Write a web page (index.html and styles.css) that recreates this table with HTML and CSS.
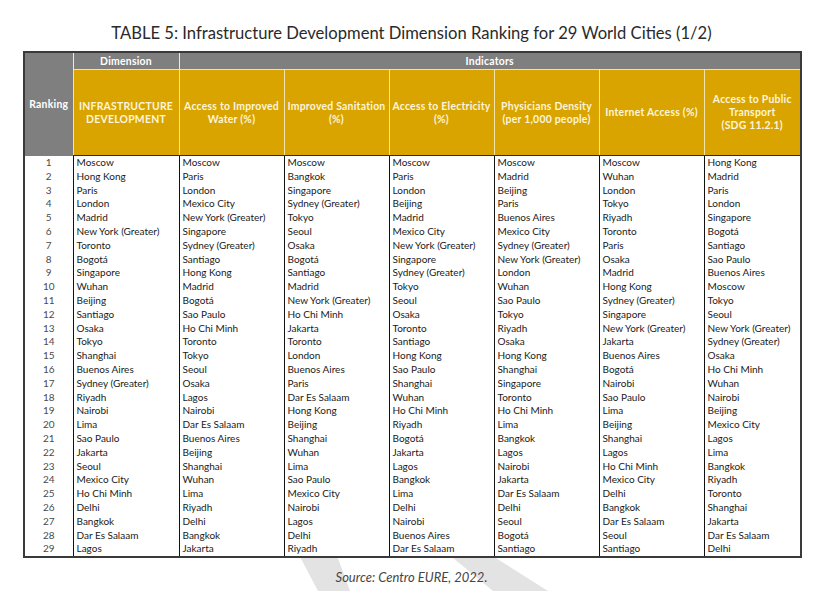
FILE: index.html
```html
<!DOCTYPE html>
<html lang="en">
<head>
<meta charset="utf-8">
<title>TABLE 5: Infrastructure Development Dimension Ranking</title>
<link rel="stylesheet" href="styles.css">
</head>
<body>
<svg class="watermark" width="823" height="591" viewBox="0 0 823 591" aria-hidden="true">
  <polygon points="298,553 336,553 350,591 318,591" fill="#e3e3e3"/>
  <polygon points="447,553 488,553 548,591 493,591" fill="#e3e3e3"/>
</svg>
<h1 class="title">TABLE 5: Infrastructure Development Dimension Ranking for 29 World Cities (1/2)</h1>
<table class="ranking-table">
  <colgroup>
    <col class="c-rank"><col class="c-dim"><col class="c-ind"><col class="c-ind"><col class="c-ind"><col class="c-ind"><col class="c-ind"><col class="c-last">
  </colgroup>
  <thead>
    <tr class="row-grey">
      <th class="grey rank-head" rowspan="2">Ranking</th>
      <th class="grey sep">Dimension</th>
      <th class="grey sep" colspan="6">Indicators</th>
    </tr>
    <tr class="row-gold">
      <th class="gold">INFRASTRUCTURE<br>DEVELOPMENT</th>
      <th class="gold">Access to Improved<br>Water (%)</th>
      <th class="gold">Improved Sanitation<br>(%)</th>
      <th class="gold">Access to Electricity<br>(%)</th>
      <th class="gold">Physicians Density<br>(per 1,000 people)</th>
      <th class="gold">Internet Access (%)</th>
      <th class="gold">Access to Public<br>Transport<br>(SDG 11.2.1)</th>
    </tr>
  </thead>
  <tbody>
    <tr><td class="rank">1</td><td>Moscow</td><td>Moscow</td><td>Moscow</td><td>Moscow</td><td>Moscow</td><td>Moscow</td><td>Hong Kong</td></tr>
    <tr><td class="rank">2</td><td>Hong Kong</td><td>Paris</td><td>Bangkok</td><td>Paris</td><td>Madrid</td><td>Wuhan</td><td>Madrid</td></tr>
    <tr><td class="rank">3</td><td>Paris</td><td>London</td><td>Singapore</td><td>London</td><td>Beijing</td><td>London</td><td>Paris</td></tr>
    <tr><td class="rank">4</td><td>London</td><td>Mexico City</td><td>Sydney (Greater)</td><td>Beijing</td><td>Paris</td><td>Tokyo</td><td>London</td></tr>
    <tr><td class="rank">5</td><td>Madrid</td><td>New York (Greater)</td><td>Tokyo</td><td>Madrid</td><td>Buenos Aires</td><td>Riyadh</td><td>Singapore</td></tr>
    <tr><td class="rank">6</td><td>New York (Greater)</td><td>Singapore</td><td>Seoul</td><td>Mexico City</td><td>Mexico City</td><td>Toronto</td><td>Bogotá</td></tr>
    <tr><td class="rank">7</td><td>Toronto</td><td>Sydney (Greater)</td><td>Osaka</td><td>New York (Greater)</td><td>Sydney (Greater)</td><td>Paris</td><td>Santiago</td></tr>
    <tr><td class="rank">8</td><td>Bogotá</td><td>Santiago</td><td>Bogotá</td><td>Singapore</td><td>New York (Greater)</td><td>Osaka</td><td>Sao Paulo</td></tr>
    <tr><td class="rank">9</td><td>Singapore</td><td>Hong Kong</td><td>Santiago</td><td>Sydney (Greater)</td><td>London</td><td>Madrid</td><td>Buenos Aires</td></tr>
    <tr><td class="rank">10</td><td>Wuhan</td><td>Madrid</td><td>Madrid</td><td>Tokyo</td><td>Wuhan</td><td>Hong Kong</td><td>Moscow</td></tr>
    <tr><td class="rank">11</td><td>Beijing</td><td>Bogotá</td><td>New York (Greater)</td><td>Seoul</td><td>Sao Paulo</td><td>Sydney (Greater)</td><td>Tokyo</td></tr>
    <tr><td class="rank">12</td><td>Santiago</td><td>Sao Paulo</td><td>Ho Chi Minh</td><td>Osaka</td><td>Tokyo</td><td>Singapore</td><td>Seoul</td></tr>
    <tr><td class="rank">13</td><td>Osaka</td><td>Ho Chi Minh</td><td>Jakarta</td><td>Toronto</td><td>Riyadh</td><td>New York (Greater)</td><td>New York (Greater)</td></tr>
    <tr><td class="rank">14</td><td>Tokyo</td><td>Toronto</td><td>Toronto</td><td>Santiago</td><td>Osaka</td><td>Jakarta</td><td>Sydney (Greater)</td></tr>
    <tr><td class="rank">15</td><td>Shanghai</td><td>Tokyo</td><td>London</td><td>Hong Kong</td><td>Hong Kong</td><td>Buenos Aires</td><td>Osaka</td></tr>
    <tr><td class="rank">16</td><td>Buenos Aires</td><td>Seoul</td><td>Buenos Aires</td><td>Sao Paulo</td><td>Shanghai</td><td>Bogotá</td><td>Ho Chi Minh</td></tr>
    <tr><td class="rank">17</td><td>Sydney (Greater)</td><td>Osaka</td><td>Paris</td><td>Shanghai</td><td>Singapore</td><td>Nairobi</td><td>Wuhan</td></tr>
    <tr><td class="rank">18</td><td>Riyadh</td><td>Lagos</td><td>Dar Es Salaam</td><td>Wuhan</td><td>Toronto</td><td>Sao Paulo</td><td>Nairobi</td></tr>
    <tr><td class="rank">19</td><td>Nairobi</td><td>Nairobi</td><td>Hong Kong</td><td>Ho Chi Minh</td><td>Ho Chi Minh</td><td>Lima</td><td>Beijing</td></tr>
    <tr><td class="rank">20</td><td>Lima</td><td>Dar Es Salaam</td><td>Beijing</td><td>Riyadh</td><td>Lima</td><td>Beijing</td><td>Mexico City</td></tr>
    <tr><td class="rank">21</td><td>Sao Paulo</td><td>Buenos Aires</td><td>Shanghai</td><td>Bogotá</td><td>Bangkok</td><td>Shanghai</td><td>Lagos</td></tr>
    <tr><td class="rank">22</td><td>Jakarta</td><td>Beijing</td><td>Wuhan</td><td>Jakarta</td><td>Lagos</td><td>Lagos</td><td>Lima</td></tr>
    <tr><td class="rank">23</td><td>Seoul</td><td>Shanghai</td><td>Lima</td><td>Lagos</td><td>Nairobi</td><td>Ho Chi Minh</td><td>Bangkok</td></tr>
    <tr><td class="rank">24</td><td>Mexico City</td><td>Wuhan</td><td>Sao Paulo</td><td>Bangkok</td><td>Jakarta</td><td>Mexico City</td><td>Riyadh</td></tr>
    <tr><td class="rank">25</td><td>Ho Chi Minh</td><td>Lima</td><td>Mexico City</td><td>Lima</td><td>Dar Es Salaam</td><td>Delhi</td><td>Toronto</td></tr>
    <tr><td class="rank">26</td><td>Delhi</td><td>Riyadh</td><td>Nairobi</td><td>Delhi</td><td>Delhi</td><td>Bangkok</td><td>Shanghai</td></tr>
    <tr><td class="rank">27</td><td>Bangkok</td><td>Delhi</td><td>Lagos</td><td>Nairobi</td><td>Seoul</td><td>Dar Es Salaam</td><td>Jakarta</td></tr>
    <tr><td class="rank">28</td><td>Dar Es Salaam</td><td>Bangkok</td><td>Delhi</td><td>Buenos Aires</td><td>Bogotá</td><td>Seoul</td><td>Dar Es Salaam</td></tr>
    <tr><td class="rank">29</td><td>Lagos</td><td>Jakarta</td><td>Riyadh</td><td>Dar Es Salaam</td><td>Santiago</td><td>Santiago</td><td>Delhi</td></tr>
  </tbody>
</table>
<p class="source">Source: Centro EURE, 2022.</p>
</body>
</html>
```

FILE: styles.css
```css
html, body {
  margin: 0;
  padding: 0;
  background: #ffffff;
}

body {
  width: 823px;
  height: 591px;
  position: relative;
  overflow: hidden;
  font-family: Lato, "Open Sans", "Liberation Sans", sans-serif;
  color: #1e1e1e;
}

.watermark {
  position: absolute;
  left: 0;
  top: 0;
  z-index: 0;
}

.title {
  position: relative;
  z-index: 1;
  margin: 0;
  padding-top: 20px;
  height: 26px;
  line-height: 26px;
  font-size: 16.6px;
  font-weight: 400;
  text-align: center;
  color: #2a2a2a;
}

.ranking-table {
  position: relative;
  z-index: 1;
  margin: 5px 0 0 23px;
  width: 777px;
  border-collapse: collapse;
  table-layout: fixed;
  background: #ffffff;
  border: 2px solid #3a3a3a;
}

.c-rank { width: 49px; }
.c-dim { width: 106px; }
.c-ind { width: 105px; }
.c-last { width: 97px; }

.ranking-table th {
  font-size: 10.4px;
  font-weight: 700;
  letter-spacing: 0.25px;
  line-height: 13px;
  padding: 0 1px;
  text-align: center;
  vertical-align: middle;
}

.grey {
  background: #7f7f7f;
  color: #ffffff;
  height: 16px;
}

.grey.sep {
  border-left: 1px solid #e9e9e9;
}

.rank-head {
  padding-bottom: 2px;
}

.gold {
  background: #d9a400;
  color: #fdf5dc;
  height: 85px;
  border-left: 1px solid #f3e3a6;
  border-top: 1px solid #f3e3a6;
  border-bottom: 1px solid #2a2a2a;
}

.ranking-table td {
  font-size: 10px;
  line-height: 13.8px;
  height: 13.8px;
  padding: 0 0 0 3px;
  border-left: 1px solid #111111;
  border-right: 1px solid #111111;
  white-space: nowrap;
  overflow: hidden;
  color: #1a1a1a;
}

.ranking-table td.rank {
  text-align: center;
  padding: 0;
  color: #4a4a4a;
}

.source {
  position: relative;
  z-index: 1;
  margin: 11px 0 0;
  line-height: 16px;
  font-size: 13px;
  font-style: italic;
  text-align: center;
  color: #454545;
}
```
